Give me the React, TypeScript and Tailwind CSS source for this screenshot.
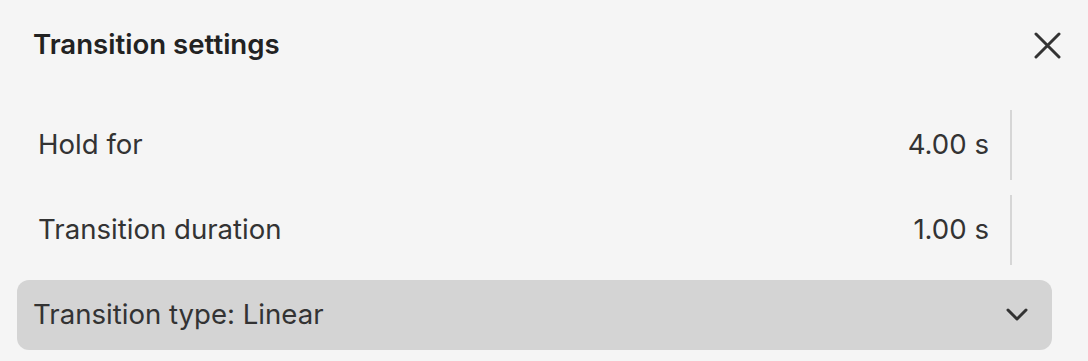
export default function App() {
  return (
    <div className="h-[361px] w-[1088px] bg-[#f5f5f5] pl-[17px] pr-[36px] font-['Inter',sans-serif]">
      <div className="flex h-[90px] items-center justify-between">
        <h1 className="pl-4 text-[27.6px] font-semibold text-[#222]">Transition settings</h1>
        <button className="-mr-[15px] grid h-10 w-10 place-items-center text-[#333]" aria-label="Close">
          <svg width="27" height="27" viewBox="0 0 27 27" fill="none" stroke="currentColor" strokeWidth="3" strokeLinecap="round">
            <path d="M2 2 25 25M25 2 2 25" />
          </svg>
        </button>
      </div>

      <div className="mt-5 flex flex-col gap-[15px]">
        {[
          ['Hold for', '4.00 s'],
          ['Transition duration', '1.00 s'],
        ].map(([label, value]) => (
          <div key={label} className="flex h-[70px] items-center text-[27.6px] text-[#333]">
            <span className="flex-1 pl-[21px]">{label}</span>
            <span>{value}</span>
            <span className="ml-[21px] h-full w-[2px] bg-[#d6d6d6]" />
            <span className="w-10" />
          </div>
        ))}

        <button className="flex h-[70px] items-center justify-between rounded-xl bg-[#d4d4d4] pl-4 pr-6 text-[27.6px] text-[#333]">
          <span>Transition type: Linear</span>
          <svg width="22" height="14" viewBox="0 0 22 14" fill="none" stroke="#333" strokeWidth="3" strokeLinecap="round" strokeLinejoin="round">
            <path d="M2 2 11 11 20 2" />
          </svg>
        </button>
      </div>
    </div>
  );
}
